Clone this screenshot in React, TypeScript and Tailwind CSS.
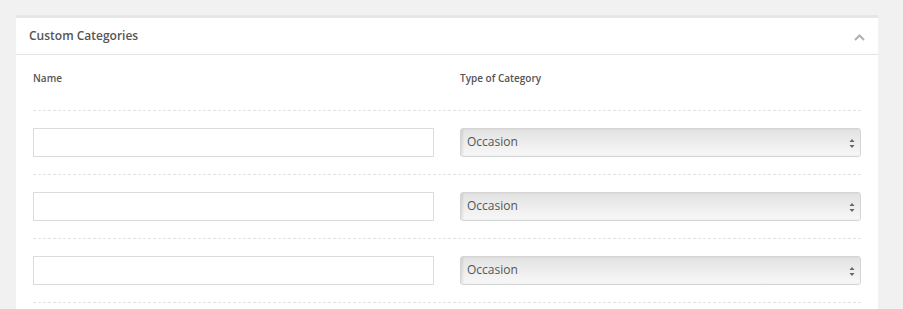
import React from "react";

const font = { fontFamily: '"Open Sans", "Noto Sans", sans-serif' };

function SelectBox() {
  return (
    <div className="relative h-[29px] w-full rounded-[3px] border border-[#d4d4d4] bg-[linear-gradient(to_bottom,#e2e2e2,#f8f8f8)] shadow-[inset_2px_0_2px_rgba(0,0,0,0.08)] flex items-center">
      <span className="pl-[6px] pb-[2px] text-[12px] text-[#555]">Occasion</span>
      <svg className="absolute right-[5px] top-[9px]" width="6" height="11" viewBox="0 0 6 11">
        <path d="M3 1 L5.5 4 L0.5 4 Z" fill="#666" />
        <path d="M3 10 L5.5 7 L0.5 7 Z" fill="#666" />
      </svg>
    </div>
  );
}

function Row() {
  return (
    <div className="border-t border-dashed border-[#e4e4e4] py-[17px] grid grid-cols-[401px_401px] gap-x-[26px]">
      <div className="h-[29px] border border-[#dcdcdc] bg-white" />
      <SelectBox />
    </div>
  );
}

export default function App() {
  return (
    <div className="min-h-[309px] w-[903px] bg-[#f1f1f1] pt-[15px] pl-[16px]" style={font}>
      <div className="w-[862px] bg-white border-t-[3px] border-[#e4e6e8]">
        <div className="h-[37px] border-b border-[#e4e4e4] flex items-center justify-between pl-[13px] pr-[13px]">
          <span className="text-[12px] font-semibold text-[#555]">Custom Categories</span>
          <svg width="11" height="7" viewBox="0 0 11 7" className="mt-[2px]">
            <path d="M1 6 L5.5 1.5 L10 6" fill="none" stroke="#b0b0b0" strokeWidth="2" />
          </svg>
        </div>
        <div className="px-[17px]">
          <div className="h-[55px] pt-[16px] grid grid-cols-[401px_401px] gap-x-[26px]">
            <span className="text-[10px] font-semibold text-[#555]">Name</span>
            <span className="text-[10px] font-semibold text-[#555]">Type of Category</span>
          </div>
          <Row />
          <Row />
          <Row />
          <div className="border-t border-dashed border-[#e4e4e4] h-[20px]" />
        </div>
      </div>
    </div>
  );
}
